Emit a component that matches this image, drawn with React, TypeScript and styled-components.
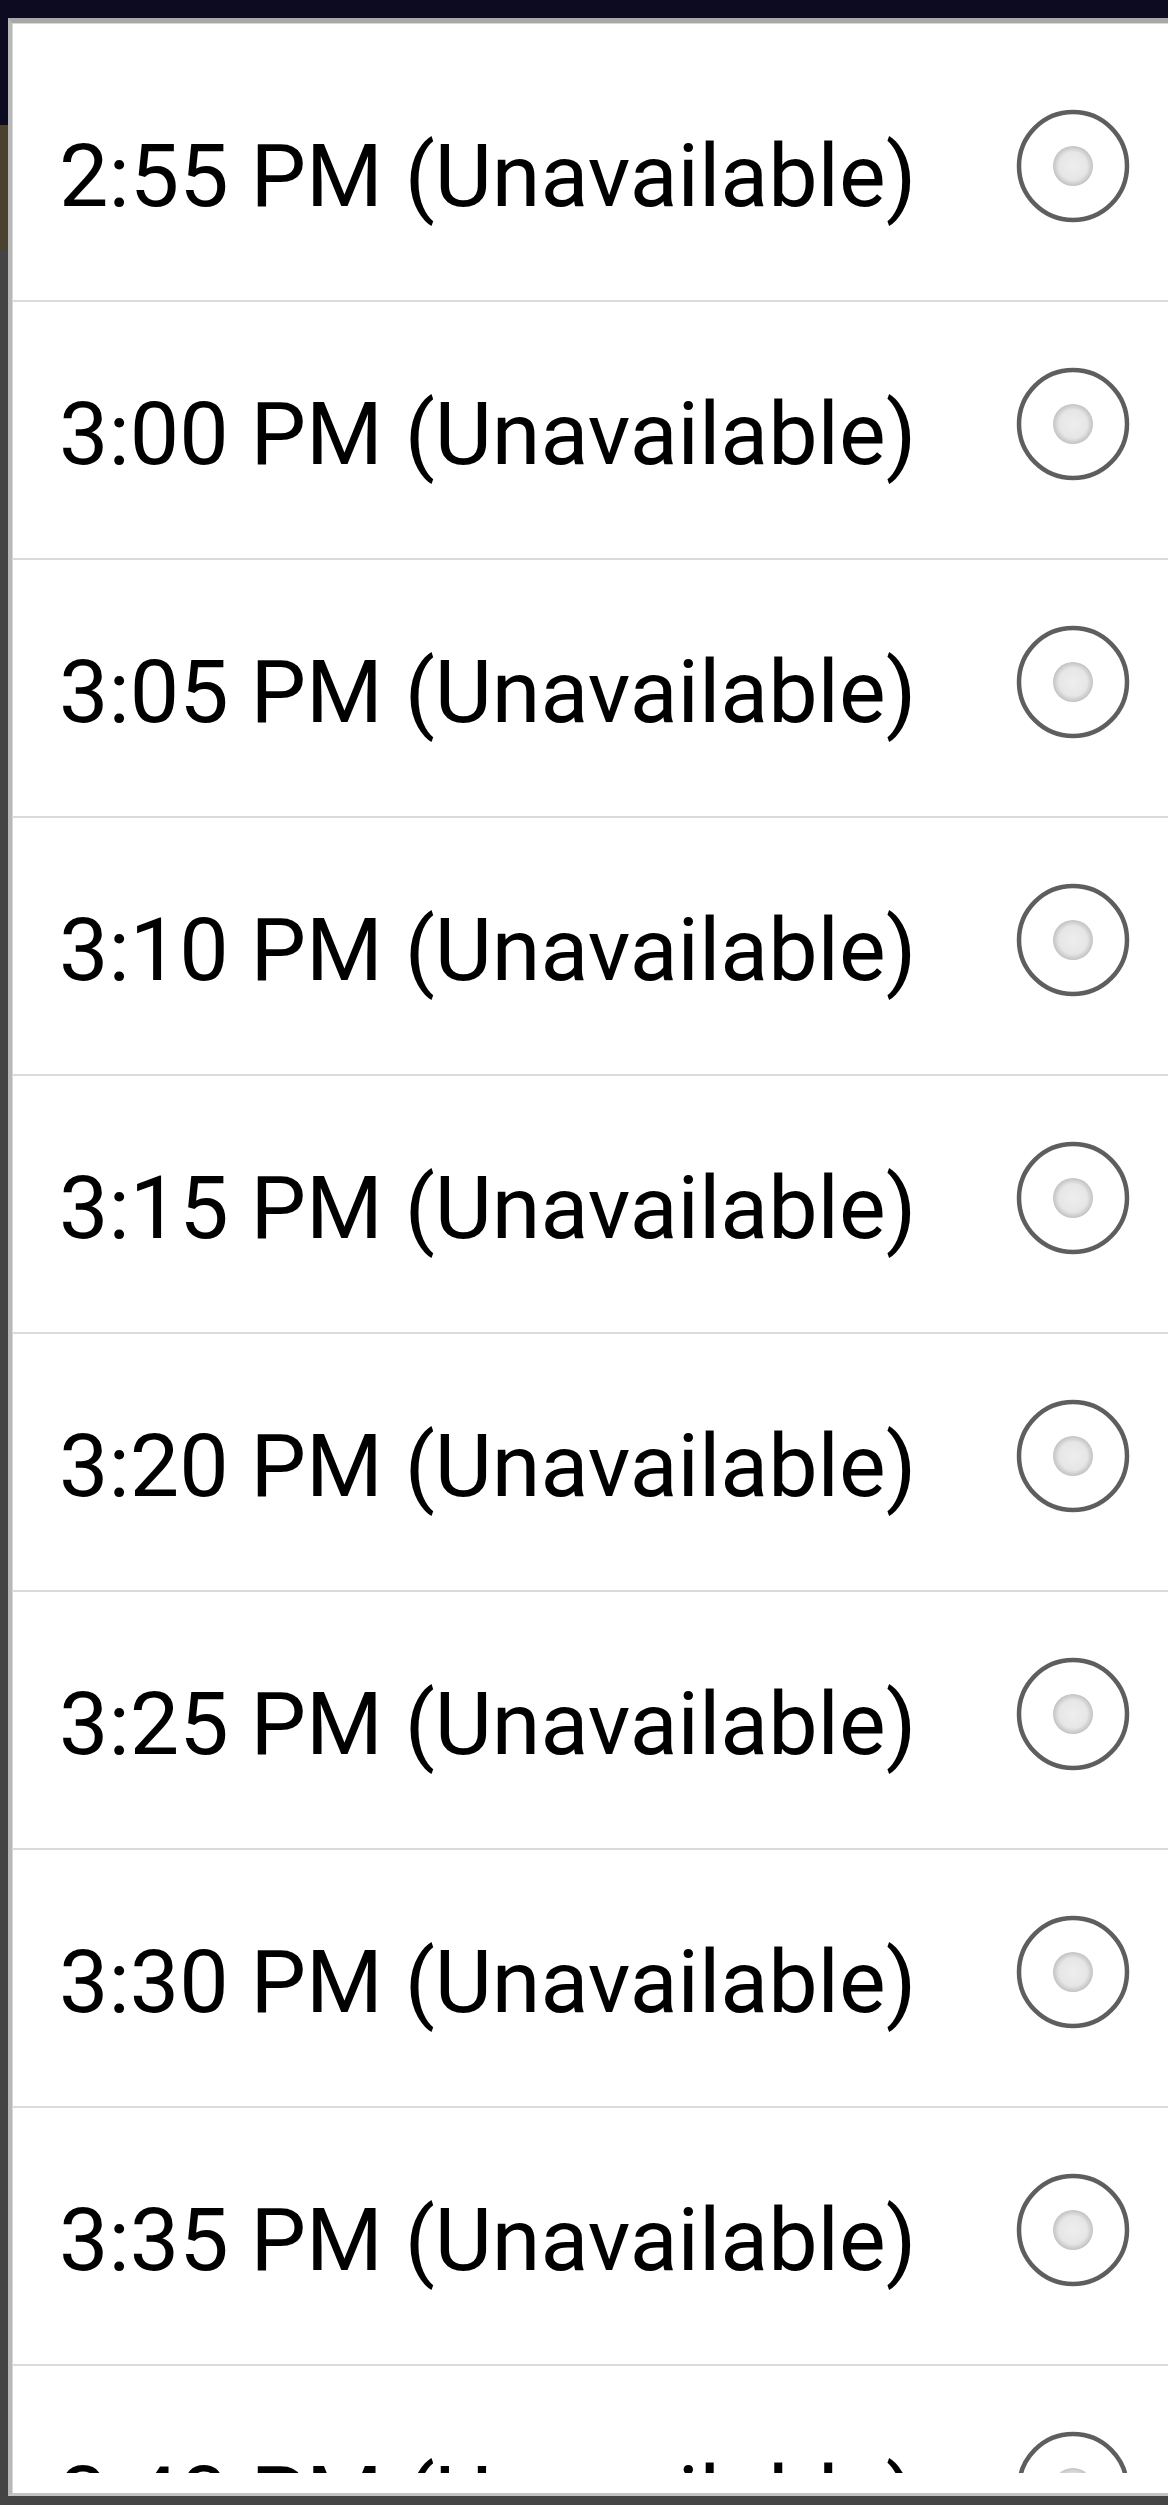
import React from "react";
import styled, { createGlobalStyle } from "styled-components";

const Global = createGlobalStyle`
  html, body {
    margin: 0;
    padding: 0;
    background: #454545;
  }
`;

const Screen = styled.div`
  width: 1168px;
  height: 2505px;
  overflow: hidden;
  display: grid;
  grid-template-columns: 8px 1fr;
  grid-template-rows: 18px 1fr 9px;
  background: #454545;
`;

const TopStrip = styled.div`
  grid-column: 1 / 3;
  background: #0d0b22;
`;

const SideStrip = styled.div`
  background: linear-gradient(
    to bottom,
    #0d0b22 0px,
    #0d0b22 107px,
    #4b412f 107px,
    #4b412f 232px,
    #444444 232px
  );
`;

const Dialog = styled.div`
  background: #fff;
  border-top: 5px solid #a8a8a8;
  border-left: 4px solid #b8b8b8;
  border-bottom: 3px solid #c4c4c4;
  box-shadow: inset 1px 1px 0 #d8d8d8;
  padding: 21px 0 20px;
  display: flex;
  flex-direction: column;
`;

const List = styled.div`
  height: 2429px;
  overflow: hidden;
  display: flex;
  flex-direction: column;
`;

const Row = styled.div`
  flex: none;
  height: 256px;
  border-bottom: 2px solid #dadada;
  display: flex;
  align-items: center;
  padding-left: 47px;
  padding-right: 35px;
`;

const Label = styled.div`
  flex: 1;
  margin-top: 7px;
  font-family: Roboto, "Noto Sans", sans-serif;
  font-size: 88px;
  color: #000;
  white-space: nowrap;
`;

const Radio = styled.svg`
  flex: none;
  width: 120px;
  height: 120px;
  margin-bottom: 12px;
  filter: blur(0.5px);
`;

const times = [
  "2:55 PM",
  "3:00 PM",
  "3:05 PM",
  "3:10 PM",
  "3:15 PM",
  "3:20 PM",
  "3:25 PM",
  "3:30 PM",
  "3:35 PM",
  "3:40 PM",
];

function RadioIcon() {
  return (
    <Radio viewBox="0 0 120 120">
      <defs>
        <radialGradient id="dot" cx="50%" cy="50%" r="50%">
          <stop offset="0%" stopColor="#eeeeee" />
          <stop offset="70%" stopColor="#e6e6e6" />
          <stop offset="100%" stopColor="#c2c2c2" />
        </radialGradient>
      </defs>
      <circle cx="60" cy="60" r="54" fill="#fff" stroke="#5e5e5e" strokeWidth="4.5" />
      <circle cx="60" cy="60" r="20" fill="url(#dot)" />
    </Radio>
  );
}

function App() {
  return (
    <Screen>
      <Global />
      <TopStrip />
      <SideStrip />
      <Dialog>
        <List>
          {times.map((t) => (
            <Row key={t}>
              <Label>{t} (Unavailable)</Label>
              <RadioIcon />
            </Row>
          ))}
        </List>
      </Dialog>
    </Screen>
  );
}

export default App;
